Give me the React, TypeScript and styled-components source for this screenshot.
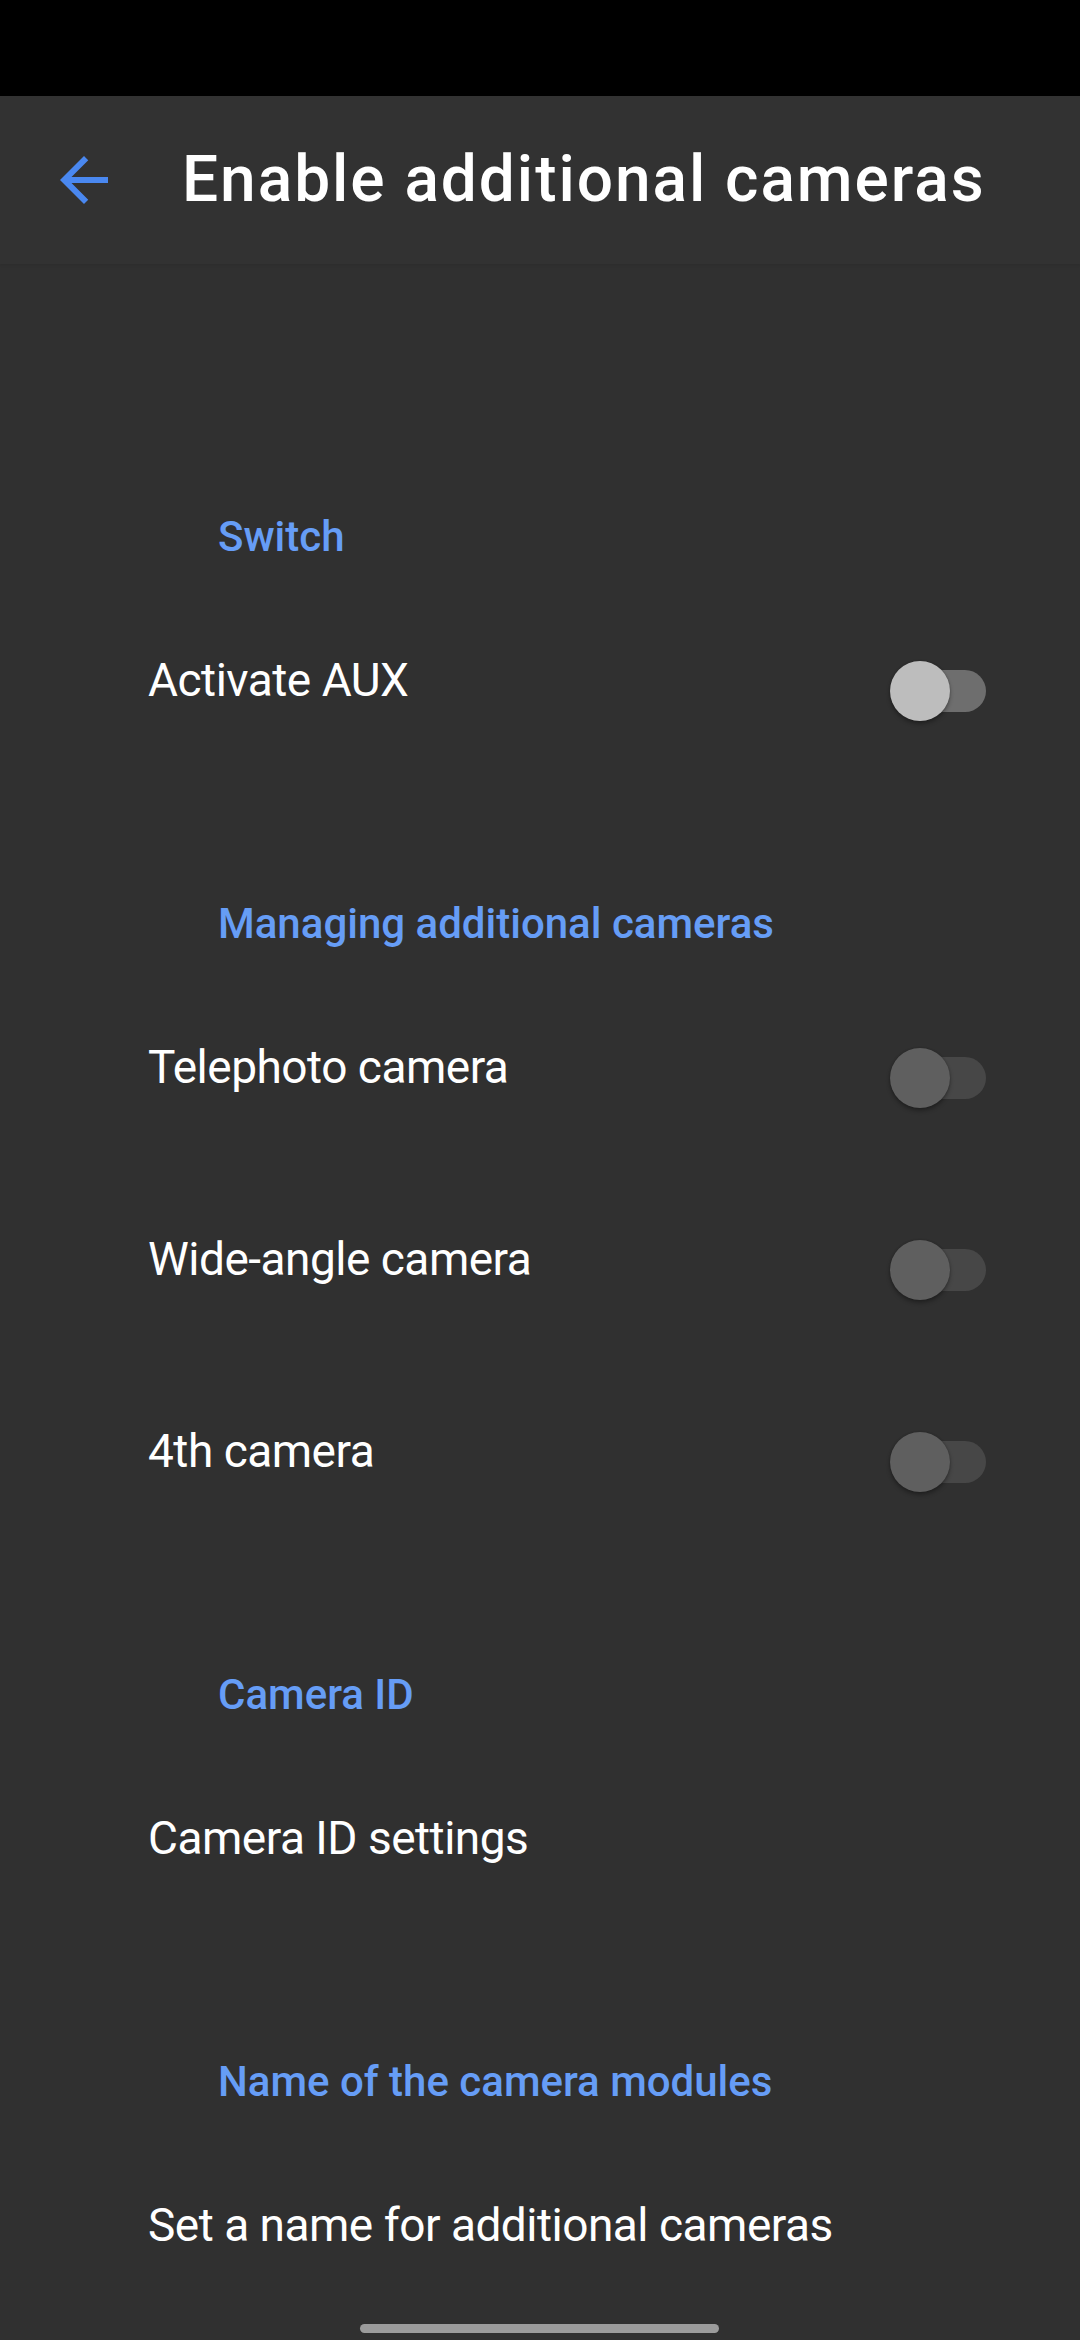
import React from "react";
import styled, { createGlobalStyle } from "styled-components";

const Global = createGlobalStyle`
  html, body { margin: 0; padding: 0; background: #303030; }
  body { font-family: Roboto, "Noto Sans", "Liberation Sans", sans-serif; -webkit-font-smoothing: antialiased; }
  * { box-sizing: border-box; }
`;

const Screen = styled.div`
  position: relative;
  width: 1080px;
  min-height: 2340px;
  background: #303030;
  overflow: hidden;
`;

const StatusBar = styled.div`
  height: 96px;
  background: #000;
`;

const AppBar = styled.header`
  position: relative;
  z-index: 1;
  height: 168px;
  display: flex;
  align-items: center;
  background: #323232;
  box-shadow: 0 1px 3px rgba(0, 0, 0, 0.1);
`;

const BackButton = styled.button`
  width: 72px;
  height: 72px;
  margin-left: 48px;
  padding: 0;
  border: 0;
  background: transparent;
  display: flex;
  align-items: center;
  justify-content: center;
  svg { display: block; }
`;

const Title = styled.h1`
  margin: 0 0 0 62px;
  font-size: 64px;
  font-weight: 500;
  line-height: 72px;
  color: #ffffff;
  letter-spacing: 1.95px;
  white-space: nowrap;
`;

const List = styled.main`
  padding-top: 136px;
  display: flex;
  flex-direction: column;
`;

const Category = styled.div`
  height: 195px;
  display: flex;
  align-items: flex-end;
  padding: 0 0 30px 218px;
  font-size: 42px;
  font-weight: 500;
  line-height: 56px;
  color: #669df6;
  white-space: nowrap;
`;

const Row = styled.div`
  height: 192px;
  display: flex;
  align-items: center;
  padding: 0 94px 0 148px;
`;

const Label = styled.div`
  flex: 1;
  margin-bottom: 22px;
  font-size: 46px;
  font-weight: 400;
  line-height: 60px;
  letter-spacing: -0.5px;
  color: #ffffff;
  white-space: nowrap;
`;

const SwitchBox = styled.div`
  position: relative;
  width: 96px;
  height: 60px;
  flex: none;
`;

const Track = styled.div<{ $enabled: boolean }>`
  position: absolute;
  right: 0;
  top: 9px;
  width: 88px;
  height: 42px;
  border-radius: 21px;
  background: ${(p) => (p.$enabled ? "#6e6e6e" : "#474747")};
`;

const Thumb = styled.div<{ $enabled: boolean }>`
  position: absolute;
  left: 0;
  top: 0;
  width: 60px;
  height: 60px;
  border-radius: 50%;
  background: ${(p) => (p.$enabled ? "#bdbdbd" : "#5f5f5f")};
  box-shadow: 0 3px 4px rgba(0, 0, 0, 0.3), 0 0 2px rgba(0, 0, 0, 0.25);
`;

const HomeHandle = styled.div`
  position: absolute;
  left: 360px;
  bottom: 7px;
  width: 359px;
  height: 9px;
  border-radius: 5px;
  background: #9b9b9b;
`;

const Toggle = ({ enabled }: { enabled: boolean }) => (
  <SwitchBox>
    <Track $enabled={enabled} />
    <Thumb $enabled={enabled} />
  </SwitchBox>
);

const BackArrow = () => (
  <svg width="72" height="72" viewBox="0 0 24 24" aria-hidden="true">
    <path
      fill="#4a88f0"
      d="M20 11H7.83l5.59-5.59L12 4l-8 8 8 8 1.41-1.41L7.83 13H20v-2z"
    />
  </svg>
);

type Item = { label: string; toggle?: boolean; enabled?: boolean };
type Section = { title: string; items: Item[] };

const sections: Section[] = [
  { title: "Switch", items: [{ label: "Activate AUX", toggle: true, enabled: true }] },
  {
    title: "Managing additional cameras",
    items: [
      { label: "Telephoto camera", toggle: true, enabled: false },
      { label: "Wide-angle camera", toggle: true, enabled: false },
      { label: "4th camera", toggle: true, enabled: false },
    ],
  },
  { title: "Camera ID", items: [{ label: "Camera ID settings" }] },
  { title: "Name of the camera modules", items: [{ label: "Set a name for additional cameras" }] },
];

export default function App() {
  return (
    <Screen>
      <Global />
      <StatusBar />
      <AppBar>
        <BackButton aria-label="Back">
          <BackArrow />
        </BackButton>
        <Title>Enable additional cameras</Title>
      </AppBar>
      <List>
        {sections.map((s) => (
          <React.Fragment key={s.title}>
            <Category>{s.title}</Category>
            {s.items.map((it) => (
              <Row key={it.label}>
                <Label>{it.label}</Label>
                {it.toggle && <Toggle enabled={!!it.enabled} />}
              </Row>
            ))}
          </React.Fragment>
        ))}
      </List>
      <HomeHandle />
    </Screen>
  );
}
